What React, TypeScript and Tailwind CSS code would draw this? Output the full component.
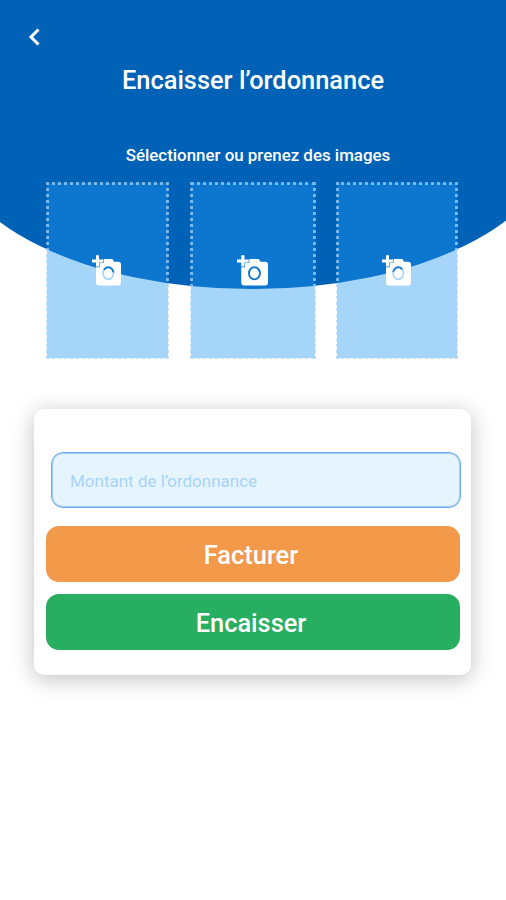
import React from 'react';
import { clsx } from 'clsx';

const slots = [
  { id: 1, className: 'w-[121px]' },
  { id: 2, className: 'ml-[23px] w-[124px]' },
  { id: 3, className: 'ml-[22px] w-[120px]' },
];

function BackIcon() {
  return (
    <svg width="12" height="18" viewBox="0 0 12 18" fill="none" stroke="white" strokeWidth="3">
      <path d="M10.5 1.5 L3 9 L10.5 16.5" />
    </svg>
  );
}

function AddPhotoIcon({ wide }: { wide?: boolean }) {
  return (
    <svg width={wide ? 31 : 29} height="31" viewBox="0 0 29 31" preserveAspectRatio="none" fill="white">
      <path d="M4 0.2h3v4.2h4v3H7v4.2H4V7.4H0v-3h4z" />
      {/* body with a see-through ring for the lens */}
      <path
        fillRule="evenodd"
        d="M11.6 4h8.800l1.600 2.800h4.400c1.400 0 2.600 1 2.600 2.300v19c0 1.400-1.200 2.500-2.600 2.500H6.600C5.200 30.600 4 29.500 4 28.100V12.200h3.600V8h4zM16.300 11.300a6 7 0 1 0 0 14a6 7 0 1 0 0-14zM16.300 13.200a4.300 5.100 0 1 1 0 10.200a4.300 5.100 0 1 1 0-10.200z"
      />
    </svg>
  );
}

export default function App() {
  return (
    <div className="grid h-[900px] w-[506px] grid-cols-[506px] overflow-hidden bg-white font-[Roboto,sans-serif]">
      {/* Curved header background */}
      <div className="col-start-1 row-start-1 -ml-[50px] h-[289px] w-[604px] rounded-[0_0_302px_302px/0_0_149px_149px] bg-[#0062b7]" />

      <div className="relative col-start-1 row-start-1 flex flex-col">
        <header className="flex flex-col text-white">
          <button className="mt-7 ml-7 h-[18px] w-3" aria-label="Retour">
            <BackIcon />
          </button>
          <h1 className="mt-4 text-center text-[25.4px] leading-9 font-medium">Encaisser l’ordonnance</h1>
          <p className="mt-[45px] ml-[10px] text-center text-[16.9px] leading-6 font-medium">
            Sélectionner ou prenez des images
          </p>
        </header>

        {/* Image slots */}
        <div className="mt-4 ml-[47px] flex">
          {slots.map((slot) => (
            <button
              key={slot.id}
              className={clsx(
                'flex h-[175px] items-center justify-center bg-[#2196f3]/40 pr-[2px] outline-[3px] -outline-offset-2 outline-dotted outline-[#a7d5f9]/70',
                slot.className
              )}
            >
              <AddPhotoIcon wide={slot.id === 2} />
            </button>
          ))}
        </div>

        {/* Payment card */}
        <div className="mt-[51px] ml-[34px] flex h-[266px] w-[437px] flex-col rounded-[10px] bg-white pl-3 shadow-[0_4px_22px_rgba(0,0,0,0.25)]">
          <input
            className="mt-[43px] ml-[5px] h-14 w-[410px] shrink-0 rounded-xl border border-[#68abee] bg-[#e6f4fe] px-[18px] pt-[2px] text-[17px] shadow-[inset_0_0_0_1px_#a5cff7] placeholder:text-[#a7d5f9]"
            placeholder="Montant de l’ordonnance"
          />
          <button className="mt-[18px] h-14 w-[414px] shrink-0 rounded-[13px] bg-[#f2994a] pt-[2px] pr-1 text-[25.4px] font-medium text-white">
            Facturer
          </button>
          <button className="mt-3 h-14 w-[414px] shrink-0 rounded-[13px] bg-[#27ae60] pt-[2px] pr-1 text-[25.4px] font-medium text-white">
            Encaisser
          </button>
        </div>
      </div>
    </div>
  );
}
